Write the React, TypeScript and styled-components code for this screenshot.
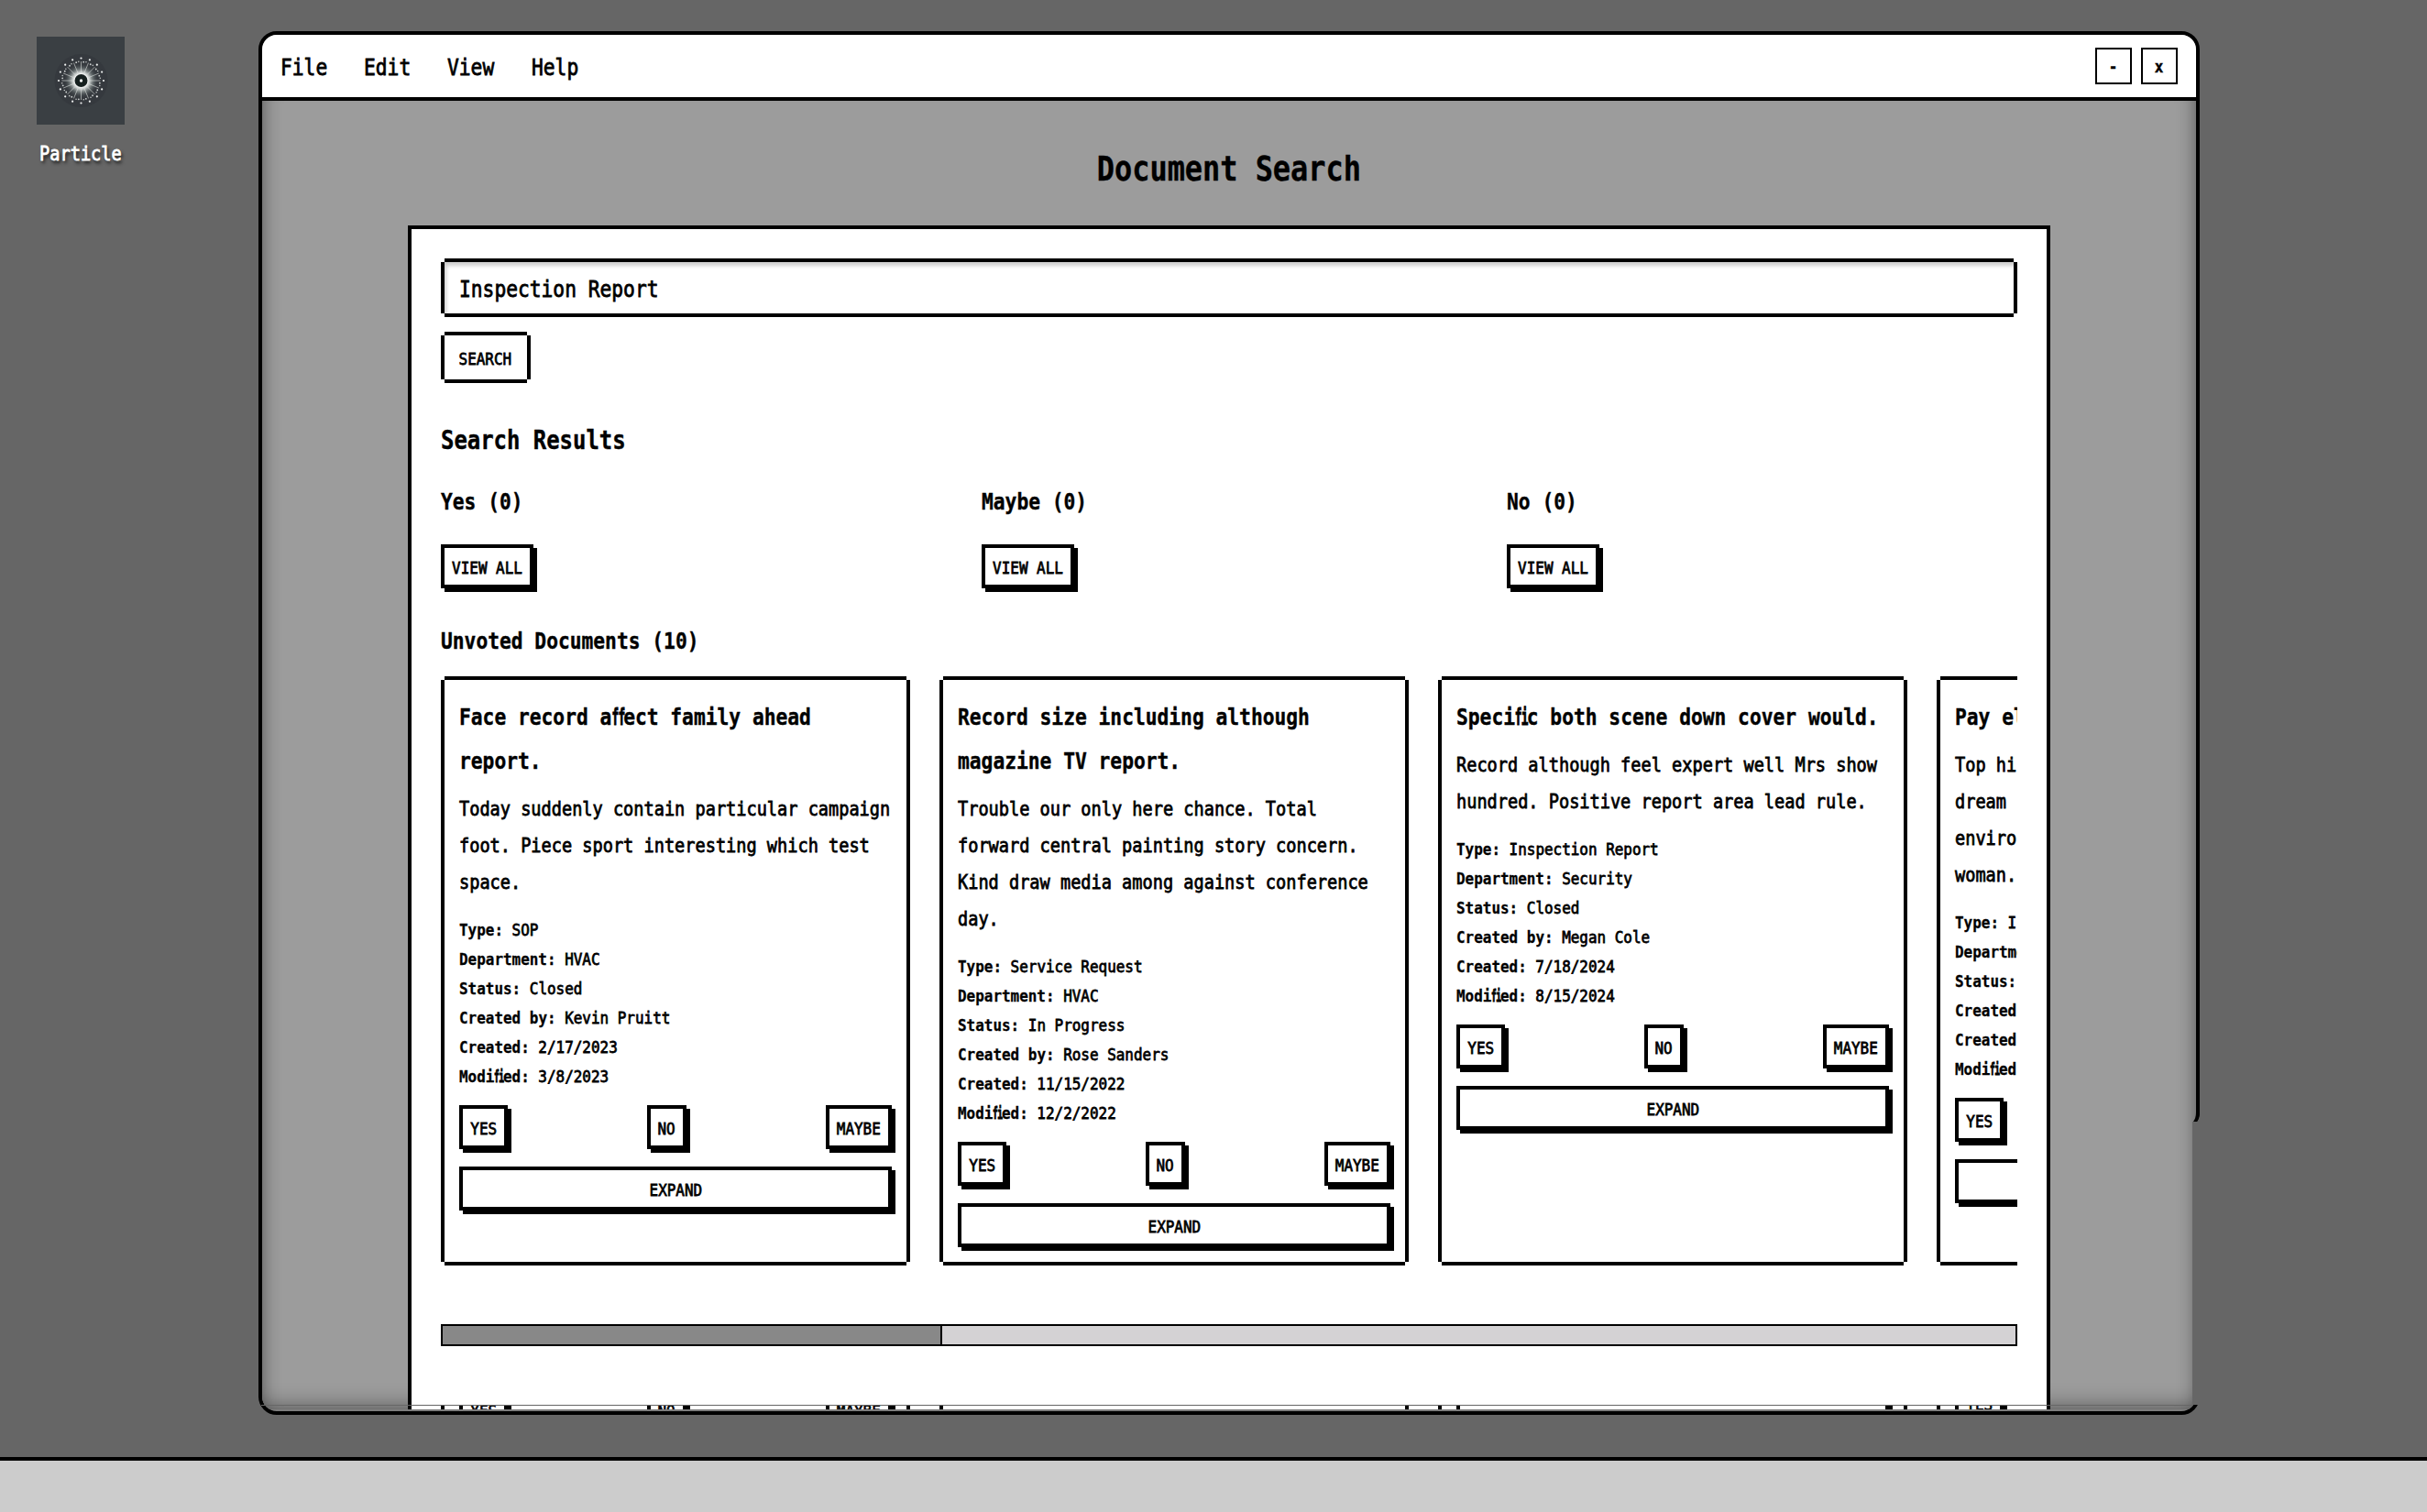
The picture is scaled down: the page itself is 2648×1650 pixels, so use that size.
import React from 'react';
import styled, { createGlobalStyle, css } from 'styled-components';

const INK = '#000';
const SQUEEZE = 0.863;

const Global = createGlobalStyle`
  * { box-sizing: border-box; }
  html, body { margin: 0; padding: 0; }
  body {
    width: 2648px;
    height: 1650px;
    overflow: hidden;
    background: #666;
    color: ${INK};
    font-family: 'DejaVu Sans Mono', 'Liberation Mono', monospace;
  }
`;

const terminal = (size: number, bold?: boolean) => css`
  font-size: ${size * 0.77}px;
  font-weight: ${bold ? 700 : 400};
  -webkit-text-stroke: ${bold ? 0.4 : 0.8}px currentColor;
  b { -webkit-text-stroke: 0.3px currentColor; }
`;

const Desktop = styled.div`
  position: relative;
  width: 2648px;
  height: 1650px;
  display: flex;
  flex-direction: column;
  justify-content: flex-end;
`;

const DesktopIcon = styled.div`
  position: absolute;
  left: 28px;
  top: 40px;
  width: 120px;
  display: flex;
  flex-direction: column;
  align-items: center;
  gap: 11px;
  color: #fff;
  svg { display: block; }
`;

const Squeezed = styled.span<{ $size: number; $bold?: boolean }>`
  display: inline-block;
  white-space: pre;
  ${p => terminal(p.$size, p.$bold)}
  transform: translateY(1px) scaleX(${SQUEEZE});
`;

const IconLabel = styled(Squeezed)`
  line-height: 40px;
  text-shadow: 2px 3px 4px rgba(0, 0, 0, 0.85);
`;

const Taskbar = styled.div`
  height: 60px;
  border-top: 4px solid ${INK};
  background: #ccc;
`;

const WindowFrame = styled.div`
  position: absolute;
  left: 282px;
  top: 34px;
  width: 2118px;
  height: 1510px;
  border: 4px solid ${INK};
  border-radius: 20px;
  overflow: hidden;
  background: #7d7d7d;
  display: flex;
  flex-direction: column;
`;

const MenuBar = styled.div`
  flex: none;
  height: 72px;
  padding: 0 20px;
  border-bottom: 4px solid ${INK};
  background: #fff;
  display: flex;
  align-items: center;
`;

const MenuItem = styled.div`
  width: 91.2px;
  padding-top: 2px;
  display: flex;
  span { transform-origin: left; line-height: 40px; }
`;

const Controls = styled.div`
  margin-left: auto;
  display: flex;
  gap: 10px;
`;

const ControlButton = styled.div`
  width: 40px;
  height: 40px;
  border: 2px solid ${INK};
  background: #fff;
  display: flex;
  align-items: center;
  justify-content: center;
  line-height: 36px;
`;

const Content = styled.div`
  flex: none;
  height: 1428px;
  overflow: hidden;
  background: #9c9c9c;
  box-shadow: inset 20px 0 20px -20px rgba(0, 0, 0, 0.45), inset -20px 0 20px -20px rgba(0, 0, 0, 0.45),
    inset 0 -24px 22px -20px rgba(0, 0, 0, 0.4);
  padding-top: 50px;
  display: flex;
  flex-direction: column;
  align-items: center;
`;

const PageTitle = styled.div`
  height: 86px;
  line-height: 48px;
`;

const Panel = styled.div`
  flex: none;
  width: 1792px;
  height: 1292px;
  overflow: hidden;
  border: 4px solid ${INK};
  border-bottom: 0;
  background: #fff;
  padding: 32px 32px 0;
`;

const notched = css`
  box-shadow: 0 -4px ${INK}, 0 4px ${INK}, -4px 0 ${INK}, 4px 0 ${INK};
`;

const SearchField = styled.div`
  margin: 4px;
  height: 56px;
  padding-left: 16px;
  display: flex;
  align-items: center;
  box-shadow: 0 -4px ${INK}, 0 4px ${INK}, -4px 0 ${INK}, 4px 0 ${INK}, inset 2px 4px 4px rgba(0, 0, 0, 0.2);
  span { transform-origin: left; }
`;

const SearchButton = styled.div`
  width: 89.6px;
  height: 48px;
  margin: 24px 4px 0;
  display: flex;
  align-items: center;
  justify-content: center;
  ${notched}
`;

const Line = styled.div<{ $size: number; $height: number; $bold?: boolean }>`
  ${p => terminal(p.$size, p.$bold)}
  line-height: ${p => p.$height}px;
  white-space: pre-line;
  width: ${100 / SQUEEZE}%;
  transform: translateY(1px) scaleX(${SQUEEZE});
  transform-origin: left top;
`;

const ResultsTitle = styled(Line)`
  margin-top: 40px;
`;

const Groups = styled.div`
  margin-top: 17px;
  height: 152px;
  display: grid;
  grid-template-columns: 590px 573px 1fr;
`;

const ViewAllSlot = styled.div`
  margin-top: 23px;
`;

const Raised = styled.div<{ $width?: number }>`
  width: ${p => (p.$width ? `${p.$width}px` : '100%')};
  height: 48px;
  flex: none;
  border: 4px solid ${INK};
  background: #fff;
  box-shadow: 4px 4px ${INK};
  display: flex;
  align-items: center;
  justify-content: center;
`;

const Carousel = styled.div`
  height: 683px;
  margin-top: 15px;
  padding: 4px 0 0 4px;
  overflow: hidden;
  display: flex;
  gap: 40px;
`;

const Card = styled.div`
  flex: none;
  width: 504px;
  height: 635px;
  padding: 16px;
  ${notched}
`;

const Summary = styled(Line)`
  margin-top: 8px;
`;

const Meta = styled.div`
  margin-top: 16px;
`;

const VoteRow = styled.div`
  margin: 16px 0 19px;
  display: flex;
  justify-content: space-between;
`;

const ScrollTrack = styled.div`
  height: 24px;
  margin-top: 24px;
  border: 2px solid ${INK};
  background: #d4d2d4;
`;

const ScrollThumb = styled.div`
  width: 545px;
  height: 100%;
  border-right: 2px solid ${INK};
  background: #888;
`;

const SeamLine = styled.div`
  position: absolute;
  left: 285px;
  top: 1533px;
  width: 2108px;
  height: 1px;
  background: #666;
`;

const SeamStrip = styled.div`
  position: absolute;
  left: 481px;
  top: 1534px;
  width: 1720px;
  height: 4px;
  overflow: hidden;
  background: #fff;
  display: flex;
  gap: 32px;
`;

const SeamCell = styled.div<{ $shift: number }>`
  flex: none;
  width: 512px;
  height: 4px;
  padding: 0 16px;
  border: solid ${INK};
  border-width: 0 4px;
  > div { margin: ${p => p.$shift}px 0 0; }
`;

const FrameGap = styled.div`
  position: absolute;
  left: 2392px;
  top: 1224px;
  width: 8px;
  height: 309px;
  background: #666;
`;

const FrameHook = styled.svg`
  position: absolute;
  left: 2392px;
  top: 1210px;
  display: block;
`;

const LigBox = styled.span`
  display: inline-block;
  width: 0.602em;
  white-space: nowrap;
`;

const LigGlyphs = styled.span`
  display: inline-block;
  letter-spacing: -0.06em;
  transform: scaleX(0.6);
  transform-origin: left;
  -webkit-text-stroke: 1.1px currentColor;
`;

const Word = styled.span`
  white-space: nowrap;
`;

function Joined({ text }: { text: string }) {
  return (
    <>
      {text.split(/(\s+)/).map((word, i) => {
        if (!/fi|ff/.test(word)) return word;
        return (
          <Word key={i}>
            {word.split(/(fi|ff)/).map((part, j) =>
              part === 'fi' || part === 'ff' ? (
                <LigBox key={j}><LigGlyphs>{part}</LigGlyphs></LigBox>
              ) : part
            )}
          </Word>
        );
      })}
    </>
  );
}

interface Doc {
  title: string;
  summary: string;
  meta: [string, string][];
}

const docs: Doc[] = [
  {
    title: 'Face record affect family ahead report.',
    summary: 'Today suddenly contain particular campaign foot. Piece sport interesting which test space.',
    meta: [['Type:', 'SOP'], ['Department:', 'HVAC'], ['Status:', 'Closed'], ['Created by:', 'Kevin Pruitt'], ['Created:', '2/17/2023'], ['Modified:', '3/8/2023']],
  },
  {
    title: 'Record size including although magazine TV report.',
    summary: 'Trouble our only here chance. Total forward central painting story concern. Kind draw media among against conference day.',
    meta: [['Type:', 'Service Request'], ['Department:', 'HVAC'], ['Status:', 'In Progress'], ['Created by:', 'Rose Sanders'], ['Created:', '11/15/2022'], ['Modified:', '12/2/2022']],
  },
  {
    title: 'Specific both scene down cover would.',
    summary: 'Record although feel expert well Mrs show hundred. Positive report area lead rule.',
    meta: [['Type:', 'Inspection Report'], ['Department:', 'Security'], ['Status:', 'Closed'], ['Created by:', 'Megan Cole'], ['Created:', '7/18/2024'], ['Modified:', '8/15/2024']],
  },
  {
    title: 'Pay el',
    summary: 'Top hi\ndream\nenviro\nwoman.',
    meta: [['Type:', 'I'], ['Department:', ''], ['Status:', ''], ['Created by:', ''], ['Created:', ''], ['Modified:', '']],
  },
];

function Action({ label, width }: { label: string; width?: number }) {
  return (
    <Raised $width={width}>
      <Squeezed $size={24}>{label}</Squeezed>
    </Raised>
  );
}

function Votes() {
  return (
    <VoteRow>
      <Action label="YES" width={52.8} />
      <Action label="NO" width={43.2} />
      <Action label="MAYBE" width={72} />
    </VoteRow>
  );
}

function DocumentCard({ doc }: { doc: Doc }) {
  return (
    <Card>
      <Line $size={32} $height={48} $bold><Joined text={doc.title} /></Line>
      <Summary $size={28} $height={40}>{doc.summary}</Summary>
      <Meta>
        {doc.meta.map(([key, value]) => (
          <Line key={key} $size={24} $height={32}>
            <b><Joined text={key} /></b> {value}
          </Line>
        ))}
      </Meta>
      <Votes />
      <Action label="EXPAND" />
    </Card>
  );
}

function ParticleIcon() {
  const rays = Array.from({ length: 16 }, (_, i) => (i * Math.PI) / 8);
  return (
    <svg width="96" height="96" viewBox="0 0 96 96">
      <defs>
        <radialGradient id="glow">
          <stop offset="0.36" stopColor="#ffffff" />
          <stop offset="0.5" stopColor="#d3d8d6" stopOpacity="0.9" />
          <stop offset="0.75" stopColor="#7d8786" stopOpacity="0.45" />
          <stop offset="1" stopColor="#33383c" stopOpacity="0" />
        </radialGradient>
      </defs>
      <rect width="96" height="96" fill="#3a3f43" />
      <circle cx="48.5" cy="48" r="29" fill="#35393e" />
      <circle cx="48.5" cy="48" r="19" fill="url(#glow)" />
      {rays.map((a, i) => {
        const at = (angle: number, radius: number) => ({
          cx: 48.5 + Math.cos(angle) * radius,
          cy: 48 + Math.sin(angle) * radius,
        });
        const x = Math.cos(a);
        const y = Math.sin(a);
        return (
          <g key={i}>
            <line x1={48.5 + x * 9} y1={48 + y * 9} x2={48.5 + x * 21} y2={48 + y * 21} stroke="#dfe3e1" strokeWidth="0.8" opacity="0.75" />
            <circle {...at(a, 24.5)} r="1.1" fill="#f0f2f1" />
            <circle {...at(a + 0.13, 20.5)} r="0.9" fill="#cfd3d2" />
            <circle {...at(a - 0.13, 21)} r="0.8" fill="#c2c6c5" />
          </g>
        );
      })}
      <circle cx="48.5" cy="48" r="7" fill="#16201f" />
      <circle cx="48.5" cy="48" r="1.7" fill="#fff" />
    </svg>
  );
}

export default function App() {
  return (
    <>
      <Global />
      <Desktop>
        <DesktopIcon>
          <ParticleIcon />
          <IconLabel $size={28}>Particle</IconLabel>
        </DesktopIcon>

        <WindowFrame>
          <MenuBar>
            {['File', 'Edit', 'View', 'Help'].map(name => (
              <MenuItem key={name}><Squeezed $size={32}>{name}</Squeezed></MenuItem>
            ))}
            <Controls>
              <ControlButton><Squeezed $size={24} $bold>-</Squeezed></ControlButton>
              <ControlButton><Squeezed $size={24} $bold>x</Squeezed></ControlButton>
            </Controls>
          </MenuBar>
          <Content>
            <PageTitle><Squeezed $size={48} $bold>Document Search</Squeezed></PageTitle>
            <Panel>
              <SearchField><Squeezed $size={32}>Inspection Report</Squeezed></SearchField>
              <SearchButton><Squeezed $size={24}>SEARCH</Squeezed></SearchButton>
              <ResultsTitle $size={36} $height={52} $bold>Search Results</ResultsTitle>
              <Groups>
                {['Yes', 'Maybe', 'No'].map(name => (
                  <div key={name}>
                    <Line $size={32} $height={48} $bold>{name} (0)</Line>
                    <ViewAllSlot><Action label="VIEW ALL" width={100.8} /></ViewAllSlot>
                  </div>
                ))}
              </Groups>
              <Line $size={32} $height={48} $bold>Unvoted Documents (10)</Line>
              <Carousel>
                {docs.map(doc => <DocumentCard key={doc.title} doc={doc} />)}
              </Carousel>
              <ScrollTrack><ScrollThumb /></ScrollTrack>
            </Panel>
          </Content>
        </WindowFrame>

        <SeamLine />
        <SeamStrip>
          <SeamCell $shift={-20}><Votes /></SeamCell>
          <SeamCell $shift={0} />
          <SeamCell $shift={-12}><Raised /></SeamCell>
          <SeamCell $shift={-27}><Action label="YES" width={52.8} /></SeamCell>
        </SeamStrip>
        <FrameGap />
        <FrameHook width="8" height="14" viewBox="0 0 8 14">
          <path d="M8 2 Q8 10 5 14 L8 14 Z" fill="#666" />
          <path d="M4 0 L8 0 L8 4 Q8 10 5 14 L1 14 Q4 10 4 4 Z" fill="#000" />
        </FrameHook>

        <Taskbar />
      </Desktop>
    </>
  );
}
